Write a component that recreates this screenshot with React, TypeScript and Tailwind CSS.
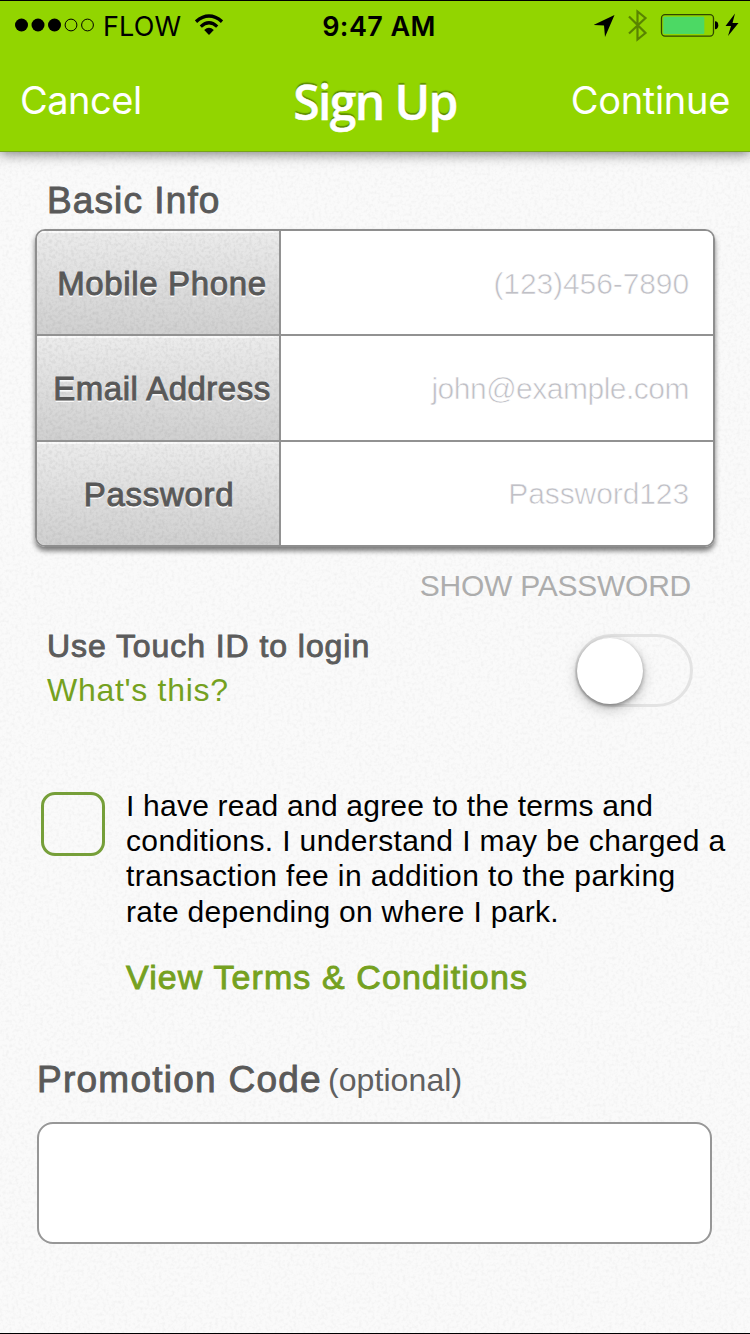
import type { ReactNode } from "react";

const helv = "font-['Liberation_Sans',Arial,sans-serif]";
const medium = "[-webkit-text-stroke:0.9px_currentColor]";

function Texture({ opacity }: { opacity: string }) {
  return (
    <svg className={`pointer-events-none absolute inset-0 h-full w-full ${opacity}`} aria-hidden="true">
      <filter id="grain" x="0" y="0" width="100%" height="100%">
        <feTurbulence type="fractalNoise" baseFrequency="0.32" numOctaves="2" seed="4" />
        <feColorMatrix type="matrix" values="0 0 0 0 0  0 0 0 0 0  0 0 0 0 0  0.9 0 0 0 -0.36" />
      </filter>
      <rect width="100%" height="100%" filter="url(#grain)" />
    </svg>
  );
}

function StatusBar() {
  return (
    <div className="grid h-[48px] grid-cols-[1fr_auto_1fr] items-center font-['Inter',sans-serif] text-black">
      <div className="flex items-center">
        <svg className="ml-[15px] h-[14px] w-[80px]" viewBox="0 0 80 14">
          <circle cx="6.5" cy="7" r="6.5" />
          <circle cx="23" cy="7" r="6.5" />
          <circle cx="39.5" cy="7" r="6.5" />
          <circle cx="56" cy="7" r="5.9" fill="none" stroke="black" />
          <circle cx="72.5" cy="7" r="5.9" fill="none" stroke="black" />
        </svg>
        <span className="mt-[2px] ml-[8px] w-[78px] text-[27px] leading-none tracking-[0.1px] whitespace-nowrap">FLOW</span>
        <svg className="ml-[14px] h-[22px] w-[28px]" viewBox="0 0 28 22" fill="none" stroke="black">
          <path d="M1 7.6 Q14 -3.4 27 7.6" strokeWidth="3.4" />
          <path d="M5.8 12.6 Q14 5 22.2 12.6" strokeWidth="3.2" />
          <path d="M9.2 16 Q14 11.6 18.8 16 L14 21 Z" fill="black" stroke="none" />
        </svg>
      </div>
      <span className="mt-[2px] pl-[8px] text-[27px] leading-none font-semibold tracking-[0.4px] whitespace-nowrap">9:47 AM</span>
      <div className="flex items-center justify-end">
        <svg className="h-[34px] w-[156px]" viewBox="594 8 156 34">
          <path d="M593.5 25 L614.5 15 L605 37 L604 25.6 Z" />
          <path d="M629 16.5 L645.5 33 L637.5 39.5 V11.5 L645.5 18 L629 33.5" fill="none" stroke="#598300" strokeWidth="2.2" />
          <rect x="661.5" y="14.7" width="52" height="21.4" rx="3.5" fill="none" stroke="#2f4600" strokeWidth="1.3" />
          <rect x="663.3" y="16.8" width="41" height="17.2" rx="1" fill="#4cd964" />
          <path d="M715 21.3 Q718.3 21.5 718.3 25.3 Q718.3 29 715 29.3 Z" />
          <path d="M735 13.5 L725.5 26 H731 L728 36 L738.5 23 H732.5 Z" />
        </svg>
      </div>
    </div>
  );
}

function Row({ label, hint, labelClass, hintClass }: { label: string; hint: string; labelClass: string; hintClass: string }) {
  return (
    <div className="flex min-h-0 flex-1 border-b-2 border-[#929292] last:border-b-0">
      <div className="relative flex w-[244px] shrink-0 items-center justify-center border-r-2 border-[#929292] bg-linear-to-b from-[#ececec] to-[#d0d0d0] shadow-[inset_0_2px_0_#fafafa]">
        <Texture opacity="opacity-15" />
        <span className={`relative mt-[2px] text-[33px] leading-none whitespace-nowrap text-[#585858] [text-shadow:0_2px_0_#fafafa] ${medium} ${labelClass}`}>{label}</span>
      </div>
      <div className={`flex flex-1 items-center justify-end bg-white pt-[2px] pr-[24px] text-[30px] leading-none text-[#c0c0c6] [-webkit-text-stroke:0.6px_white] ${hintClass}`}>{hint}</div>
    </div>
  );
}

function Heading({ children, className }: { children: ReactNode; className: string }) {
  return <span className={`text-[37px] leading-[40px] whitespace-nowrap text-[#595959] ${medium} ${className}`}>{children}</span>;
}

export default function App() {
  return (
    <div className={`relative flex h-[1334px] w-[750px] flex-col overflow-hidden border-y border-black bg-[#fafafa] ${helv}`}>
      <Texture opacity="opacity-[0.08]" />
      <header className="relative h-[151px] shrink-0 border-b border-[#76a31a] bg-[#92d500] shadow-[0_2px_12px_rgba(0,0,0,0.5)]">
        <StatusBar />
        <div className="grid h-[102px] grid-cols-[1fr_auto_1fr] px-[20px] font-['Inter',sans-serif] text-[38px] leading-[102px] text-white">
          <span className="tracking-[-0.5px]">Cancel</span>
          <span className="font-['Open_Sans',sans-serif] text-[48px] leading-[106px] font-semibold tracking-[-1.6px] [-webkit-text-stroke:0.5px_white] [text-shadow:0_-2px_1px_rgba(70,110,0,0.7)]">Sign Up</span>
          <span className="text-right tracking-[-0.3px]">Continue</span>
        </div>
      </header>

      <main className="relative flex flex-1 flex-col">
        <Heading className="mt-[29px] ml-[47px] tracking-[1.1px]">Basic Info</Heading>
        <section className="mt-[8px] ml-[35px] flex h-[318px] w-[680px] flex-col overflow-hidden rounded-[10px] border-2 border-[#8e8e8e] shadow-[0_4px_5px_rgba(0,0,0,0.5)]">
          <Row label="Mobile Phone" hint="(123)456-7890" labelClass="pl-[8px] tracking-[0.65px]" hintClass="tracking-[-0.1px]" />
          <Row label="Email Address" hint="john@example.com" labelClass="pl-[8px] tracking-[0.5px]" hintClass="tracking-[-0.5px]" />
          <Row label="Password" hint="Password123" labelClass="pl-[2px] tracking-[0.7px]" hintClass="tracking-[-0.1px]" />
        </section>
        <span className="mt-[22px] mr-[59px] self-end text-[30px] leading-[34px] tracking-[-0.25px] text-[#adadad]">SHOW PASSWORD</span>

        <div className="mt-[22px] ml-[47px] flex h-[86px] items-start justify-between pr-[57px]">
          <div className="-mt-[1px] flex flex-col">
            <span className={`text-[32px] leading-[44px] tracking-[0.93px] text-[#5b5b5b] ${medium}`}>Use Touch ID to login</span>
            <span className="text-[32px] leading-[44px] tracking-[0.7px] text-[#75a11f]">What's this?</span>
          </div>
          <div className="mt-[9px] flex h-[73px] w-[118px] items-center rounded-full border-3 border-[#e3e3e3]">
            <div className="-ml-px h-[66px] w-[66px] shrink-0 rounded-full bg-white shadow-[0_5px_14px_rgba(0,0,0,0.22),0_2px_4px_rgba(0,0,0,0.35)]" />
          </div>
        </div>

        <div className="mt-[77px] ml-[41px] flex items-start">
          <div className="mt-[4px] h-[64px] w-[64px] shrink-0 rounded-[14px] border-3 border-[#769f39]" />
          <div className="ml-[21px] flex flex-col text-[30px] leading-[35.2px] whitespace-nowrap text-black">
            <span className="tracking-[0.22px]">I have read and agree to the terms and</span>
            <span className="tracking-[0.37px]">conditions. I understand I may be charged a</span>
            <span className="tracking-[0.42px]">transaction fee in addition to the parking</span>
            <span className="tracking-[0.3px]">rate depending on where I park.</span>
            <span className={`mt-[28px] text-[34px] leading-[40px] tracking-[1.1px] text-[#75a11f] ${medium}`}>View Terms &amp; Conditions</span>
          </div>
        </div>

        <div className="mt-[63px] ml-[37px] flex items-start">
          <Heading className="tracking-[1.25px]">Promotion Code</Heading>
          <span className="ml-[6px] text-[32px] leading-[40px] tracking-[0.1px] text-[#606060]">(optional)</span>
        </div>
        <div className="mt-[22px] ml-[37px] h-[122px] w-[675px] rounded-[16px] border-2 border-[#979797] bg-white" />
      </main>
    </div>
  );
}
